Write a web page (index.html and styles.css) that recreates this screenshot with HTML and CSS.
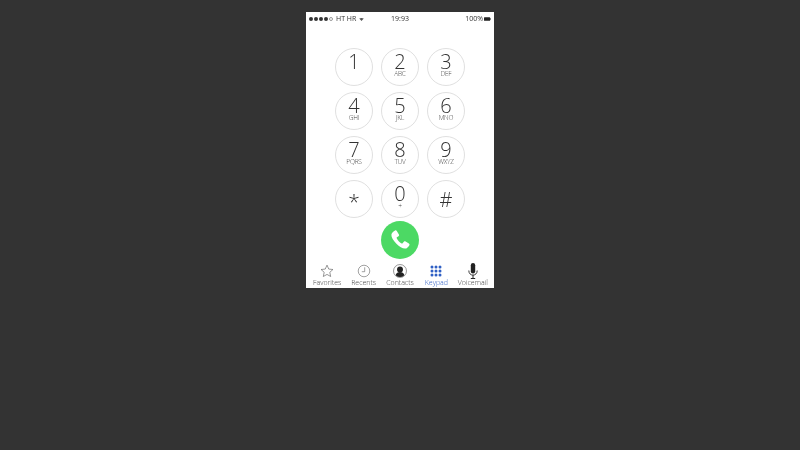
FILE: index.html
```html
<!DOCTYPE html>
<html lang="en">
<head>
<meta charset="utf-8">
<title>Keypad</title>
<link rel="stylesheet" href="styles.css">
</head>
<body>
<main class="phone">
  <header class="status">
    <div class="status-left">
      <span class="signal"><i></i><i></i><i></i><i></i><i class="empty"></i></span>
      <span>HT HR</span>
      <svg class="wifi" viewBox="0 0 6 4" width="5" height="3"><path d="M0 .6Q3-.6 6 .6L3 4z" fill="#555"/></svg>
    </div>
    <div class="status-time">19:93</div>
    <div class="status-right">
      <span>100%</span>
      <svg class="battery" viewBox="0 0 8 4" width="7" height="4"><rect width="7" height="4" rx=".6" fill="#222"/><rect x="7.200" y="1.200" width=".8" height="1.600" fill="#222"/></svg>
    </div>
  </header>
  <section class="keypad">
    <button class="key"><span class="num">1</span></button>
    <button class="key"><span class="num">2</span><span class="letters">ABC</span></button>
    <button class="key"><span class="num">3</span><span class="letters">DEF</span></button>
    <button class="key"><span class="num">4</span><span class="letters">GHI</span></button>
    <button class="key"><span class="num">5</span><span class="letters">JKL</span></button>
    <button class="key"><span class="num">6</span><span class="letters">MNO</span></button>
    <button class="key"><span class="num">7</span><span class="letters">PQRS</span></button>
    <button class="key"><span class="num">8</span><span class="letters">TUV</span></button>
    <button class="key"><span class="num">9</span><span class="letters">WXYZ</span></button>
    <button class="key"><span class="num star">*</span></button>
    <button class="key"><span class="num">0</span><span class="letters">+</span></button>
    <button class="key"><span class="num hash">#</span></button>
  </section>
  <div class="call-row">
    <button class="key call">
      <svg viewBox="0 0 24 24" width="22" height="22"><path d="M6.600 1.600c.7-.4 1.500-.2 1.900.5l2.300 3.800c.4.700.2 1.400-.4 1.900l-1.800 1.300c-.3.200-.4.600-.2 1 .6 1.300 1.300 2.300 2.200 3.200.9 1 1.900 1.800 3.200 2.500.4.200.8.100 1-.2l1.400-1.700c.5-.6 1.300-.7 1.900-.3l3.600 2.300c.7.500.9 1.300.4 2-.9 1.500-2.500 3.500-4.700 3.500-2.700 0-6.200-2-9.300-5.200C4.600 12.700 2.500 9 2.600 6.400c.1-2.100 2.400-3.900 4-4.800z" fill="#fff"/></svg>
    </button>
  </div>
  <nav class="tabs">
    <a class="tab">
      <svg viewBox="0 0 16 16" width="14" height="14"><path d="M8 1.300l2 4.500 4.800.5-3.600 3.200 1 4.800L8 11.900l-4.200 2.400 1-4.800L1.200 6.300 6 5.800z" fill="none" stroke="#555" stroke-width=".7"/></svg>
      <span>Favorites</span>
    </a>
    <a class="tab">
      <svg viewBox="0 0 16 16" width="14" height="14"><circle cx="8" cy="8" r="6.600" fill="none" stroke="#666" stroke-width=".7"/><path d="M8.800 3.800V8.800H5.500" fill="none" stroke="#666" stroke-width=".7"/></svg>
      <span>Recents</span>
    </a>
    <a class="tab">
      <svg viewBox="0 0 16 16" width="14" height="14"><circle cx="8" cy="8" r="7.400" fill="none" stroke="#555" stroke-width=".7"/><circle cx="8" cy="6.200" r="3.400" fill="#222"/><path d="M3 12.800c.6-2.600 2.600-3.800 5-3.800s4.400 1.200 5 3.800a7 7 0 0 1-10 0z" fill="#222"/></svg>
      <span>Contacts</span>
    </a>
    <a class="tab active">
      <svg class="tab-grid" viewBox="0 0 14 14" width="14" height="14"><circle cx="3" cy="3" r="1.500"/><circle cx="7" cy="3" r="1.500"/><circle cx="11" cy="3" r="1.500"/><circle cx="3" cy="7" r="1.500"/><circle cx="7" cy="7" r="1.500"/><circle cx="11" cy="7" r="1.500"/><circle cx="3" cy="11" r="1.500"/><circle cx="7" cy="11" r="1.500"/><circle cx="11" cy="11" r="1.500"/></svg>
      <span>Keypad</span>
    </a>
    <a class="tab">
      <svg class="tab-mic" viewBox="0 0 14 16" width="14" height="16"><rect x="4.800" y="0" width="4.400" height="10.500" rx="2.200" fill="#222"/><path d="M2.800 7.500c0 3 1.900 4.600 4.200 4.600s4.200-1.600 4.200-4.600" fill="none" stroke="#222" stroke-width=".9"/><path d="M7 12v3.500M4.800 15.500h4.400" stroke="#222" stroke-width="1"/></svg>
      <span>Voicemail</span>
    </a>
  </nav>
</main>
</body>
</html>
```

FILE: styles.css
```css
* { box-sizing: border-box; }
html, body { height: 100%; }
body {
  margin: 0;
  background: #333;
  font-family: "Open Sans", sans-serif;
  color: #333;
  overflow: hidden;
}
.phone {
  width: 188px;
  height: 276px;
  margin: 12px auto 0;
  background: #fff;
  display: flex;
  flex-direction: column;
  will-change: transform;
}
.status {
  height: 13px;
  padding: 0 3px;
  display: grid;
  grid-template-columns: 1fr auto 1fr;
  align-items: center;
  font-size: 7px;
  line-height: 13px;
  color: #333;
}
.status-left { display: flex; align-items: center; gap: 3px; }
.status-right { display: flex; align-items: center; justify-content: flex-end; gap: 1px; }
.signal { display: flex; gap: 1px; }
.signal i { width: 4px; height: 4px; border-radius: 50%; background: #333; display: block; }
.signal i.empty { background: none; border: .5px solid #999; }
.wifi { margin-top: 1px; }
.keypad {
  margin-top: 23px;
  display: grid;
  grid-template-columns: repeat(3, 38px);
  grid-auto-rows: 38px;
  gap: 6px 8px;
  justify-content: center;
}
.key {
  width: 38px;
  height: 38px;
  padding: 0;
  border: 1px solid #e0e0e0;
  border-radius: 50%;
  background: #fff;
  color: #333;
  font-family: inherit;
  display: flex;
  flex-direction: column;
  align-items: center;
  justify-content: flex-start;
}
.num {
  display: block;
  font-weight: 300;
  font-size: 20px;
  line-height: 16px;
  margin-top: 5px;
}
.star { font-size: 21px; margin-top: 12px; }
.hash { margin-top: 11px; }
.letters {
  display: block;
  font-weight: 300;
  font-size: 6.500px;
  line-height: 7px;
  letter-spacing: -.2px;
  color: #444;
}
.call-row {
  margin-top: 3px;
  display: flex;
  justify-content: center;
}
.call {
  background: #4cd964;
  border: none;
  align-items: center;
  justify-content: center;
}
.tabs {
  margin-top: 5px;
  display: grid;
  grid-template-columns: repeat(5, 1fr);
  padding: 0 3px;
  justify-items: center;
}
.tab {
  display: flex;
  flex-direction: column;
  align-items: center;
  font-size: 7px;
  font-weight: 300;
  line-height: 9px;
  color: #444;
  white-space: nowrap;
}
.tab span { margin-top: -.5px; }
.tab-grid { fill: #2f5fc4; }
.tab-mic { margin: -1px 0 -1px; }
.tab.active { color: #2f5fc4; }
```
